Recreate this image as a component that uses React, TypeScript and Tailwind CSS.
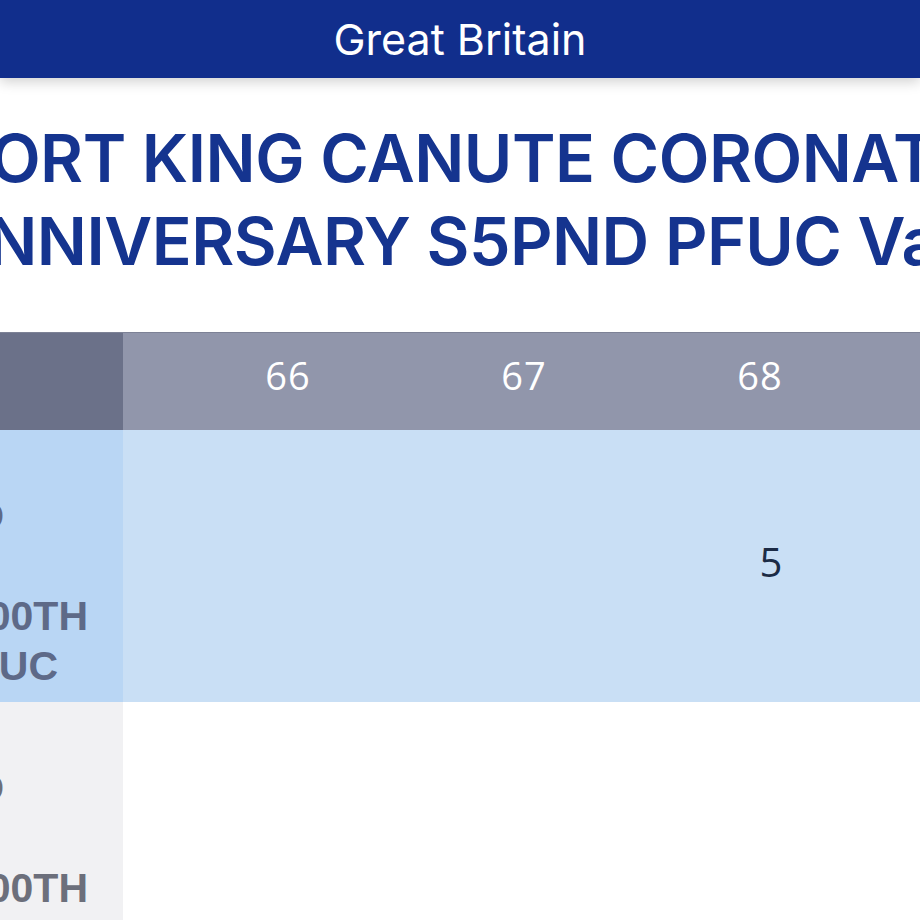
import React from 'react';

const cols = ['66', '67', '68', '69'];

function LabelLines({ tone, lines }: { tone: string; lines: { text: string; pr: string }[] }) {
  return (
    <div className={`flex flex-col justify-center h-full text-[41px] font-bold leading-[50px] ${tone}`}>
      {lines.map((l, i) => (
        <div key={i} className={`flex justify-end whitespace-nowrap ${l.pr}`}>
          <span className="shrink-0">{l.text}</span>
        </div>
      ))}
    </div>
  );
}

export default function App() {
  return (
    <div className="w-[920px] h-[920px] overflow-hidden bg-white font-['Inter',sans-serif]">
      {/* top bar */}
      <div className="relative z-10 h-[78px] bg-[#112e8c] flex items-center justify-center shadow-[0_4px_12px_rgba(0,0,0,0.18)]">
        <span className="text-white text-[43px] leading-none">Great Britain</span>
      </div>

      {/* title */}
      <div className="h-[254px] flex flex-col items-center justify-center text-[#15348f] font-semibold text-[66px] leading-[83px] tracking-[-0.5px] whitespace-nowrap pb-[10px]">
        <div className="ml-[6px]">ORT KING CANUTE CORONAT</div>
        <div className="ml-[6px]">NNIVERSARY S5PND PFUC Va</div>
      </div>

      {/* table */}
      <div className="font-['Open_Sans',sans-serif]">
        <div className="flex h-[98px] border-t border-[#7d8296]">
          <div className="w-[123px] shrink-0 bg-[#6b7189]" />
          <div className="flex-1 flex bg-[#9196ab] text-white text-[38px] font-medium tracking-[1px]">
            <div className="w-[47px] shrink-0" />
            {cols.map((c) => (
              <div key={c} className="w-[236px] shrink-0 flex items-center justify-center pb-[12px]">
                {c}
              </div>
            ))}
          </div>
        </div>

        <div className="flex h-[272px]">
          <div className="w-[123px] shrink-0 bg-[#b9d6f4] overflow-hidden font-['Liberation_Sans',sans-serif]">
            <LabelLines
              tone="text-[#5e6a88]"
              lines={[
                { text: '2017 SILVER PROOF', pr: 'pr-[140px]' },
                { text: 'KING CANUTE D', pr: 'pr-[119px]' },
                { text: 'CORONATION', pr: 'pr-[140px]' },
                { text: '1000TH', pr: 'pr-[35px]' },
                { text: 'PFUC', pr: 'pr-[65px]' },
              ]}
            />
          </div>
          <div className="flex-1 flex bg-[#c9dff5]">
            <div className="w-[47px] shrink-0" />
            {cols.map((c) => (
              <div key={c} className="w-[236px] shrink-0 flex items-center justify-center text-[40px] text-[#1b2b45] pl-[22px] pb-[8px]">
                {c === '68' ? '5' : ''}
              </div>
            ))}
          </div>
        </div>

        <div className="flex h-[272px]">
          <div className="w-[123px] shrink-0 bg-[#f1f1f3] overflow-hidden font-['Liberation_Sans',sans-serif]">
            <LabelLines
              tone="text-[#6c6f7b]"
              lines={[
                { text: '2017 GOLD PROOF', pr: 'pr-[140px]' },
                { text: 'KING CANUTE D', pr: 'pr-[119px]' },
                { text: 'CORONATION', pr: 'pr-[140px]' },
                { text: '1000TH', pr: 'pr-[35px]' },
                { text: 'PFUC', pr: 'pr-[65px]' },
              ]}
            />
          </div>
          <div className="flex-1 bg-white" />
        </div>
      </div>
    </div>
  );
}
